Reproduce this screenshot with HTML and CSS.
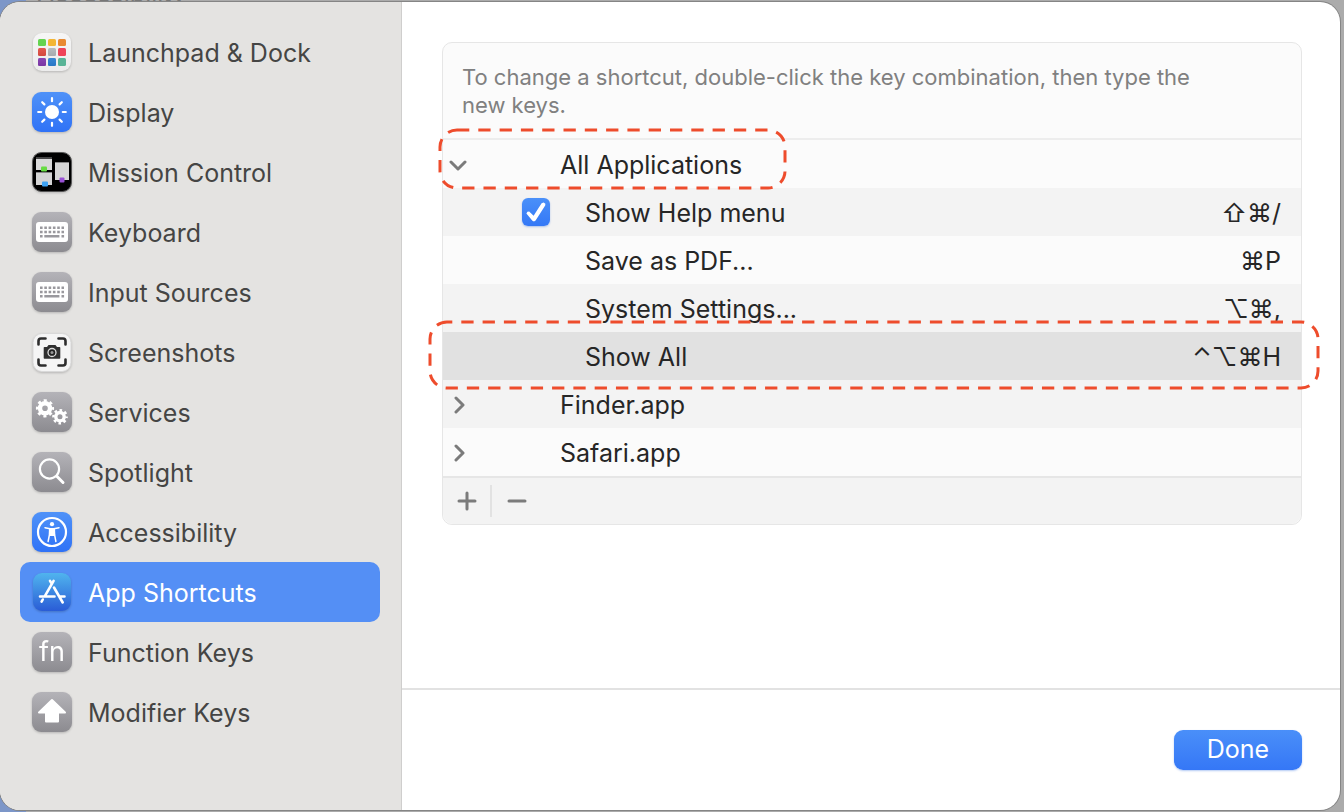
FILE: index.html
```html
<!DOCTYPE html>
<html lang="en">
<head>
    <meta charset="UTF-8">
    <meta name="viewport" content="width=device-width, initial-scale=1.0">
    <title>Keyboard Shortcuts</title>
    <link rel="stylesheet" href="styles.css">
</head>
<body>
    <!-- Shared gradients and tile shapes -->
    <svg class="defs" aria-hidden="true">
        <defs>
            <linearGradient id="gray" x1="0" y1="0" x2="0" y2="1"><stop offset="0" stop-color="#b4b3b8"/><stop offset="1" stop-color="#8c8b90"/></linearGradient>
            <linearGradient id="blue" x1="0" y1="0" x2="0" y2="1"><stop offset="0" stop-color="#4f92f8"/><stop offset="1" stop-color="#2f72f6"/></linearGradient>
            <linearGradient id="store" x1="0" y1="0" x2="0" y2="1"><stop offset="0" stop-color="#50b4ee"/><stop offset="1" stop-color="#2a5cd6"/></linearGradient>
            <linearGradient id="shade" x1="0" y1="0" x2="0" y2="1"><stop offset="0" stop-color="#fff" stop-opacity=".25"/><stop offset="1" stop-color="#000" stop-opacity=".25"/></linearGradient>
            <linearGradient id="tile" x1="0" y1="0" x2="0" y2="1"><stop offset="0" stop-color="#f6f6f6"/><stop offset="1" stop-color="#ececec"/></linearGradient>
            <symbol id="keys" viewBox="0 0 40 40">
                <rect width="40" height="40" rx="9" fill="url(#gray)"/>
                <rect x="4" y="10" width="32" height="20" rx="3" fill="#fff"/>
                <path d="M8 15.7h24M8 20h24" stroke="#99989d" stroke-width="2.5" stroke-dasharray="2.6 1.7"/>
                <path d="M8 24.3h2.6M12.3 24.3h15.1M29.5 24.3h2.6" stroke="#99989d" stroke-width="2.5"/>
            </symbol>
        </defs>
    </svg>

    <div class="backdrop" aria-hidden="true"><span>Accessibility</span></div>

    <div class="window">
        <nav class="sidebar">
            <a href="#launchpad">
                <svg class="icon" viewBox="0 0 40 40">
                    <rect x="1" y="1" width="38" height="38" rx="9" fill="url(#tile)"/>
                    <g>
                        <rect x="6" y="7" width="8" height="7" rx="1.5" fill="#65d450"/><rect x="16" y="7" width="8" height="7" rx="1.5" fill="#f3b636"/><rect x="26" y="7" width="8" height="7" rx="1.5" fill="#e88a32"/>
                        <rect x="6" y="16" width="8" height="8" rx="1.5" fill="#df3d31"/><rect x="16" y="16" width="8" height="8" rx="1.5" fill="#aab1b5"/><rect x="26" y="16" width="8" height="8" rx="1.5" fill="#ee4459"/>
                        <rect x="6" y="26" width="8" height="8" rx="1.5" fill="#8e3fc0"/><rect x="16" y="26" width="8" height="8" rx="1.5" fill="#2f8ce8"/><rect x="26" y="26" width="8" height="8" rx="1.5" fill="#59b497"/>
                    </g>
                    <path d="M6 16h8v8H6zM16 16h8v8h-8zM6 26h8v8H6zM16 26h8v8h-8z" fill="url(#shade)" opacity=".6"/>
                </svg>
                Launchpad &amp; Dock
            </a>
            <a href="#display">
                <svg class="icon" viewBox="0 0 40 40">
                    <rect width="40" height="40" rx="9" fill="url(#blue)"/>
                    <circle cx="20" cy="20" r="7" fill="#fff"/>
                    <path d="M20 6.2v3M20 30.8v3M6.2 20h3M30.8 20h3M10.2 10.2l2.2 2.2M27.6 27.6l2.2 2.2M10.2 29.8l2.2-2.2M27.6 12.4l2.2-2.2" stroke="#fff" stroke-width="2.2" stroke-linecap="round"/>
                </svg>
                Display
            </a>
            <a href="#mission-control">
                <svg class="icon" viewBox="0 0 40 40">
                    <rect x="0.5" y="0.5" width="39" height="39" rx="9" fill="#000" stroke="#555"/>
                    <rect x="4" y="7" width="16" height="11" fill="#d9d9d9"/><rect x="4" y="21" width="16" height="12" fill="#d4d4d4"/><rect x="23" y="11" width="14" height="17" fill="#d6d6d6"/>
                    <path d="M4 6h16M4 20.5h16M23 10.5h14" stroke="#888"/>
                    <rect x="9" y="14.5" width="6" height="5" rx="1" fill="#67dc43"/><rect x="10" y="29.5" width="6" height="5" rx="1" fill="#3ea2f3"/><rect x="27.5" y="25.5" width="5" height="5" rx="1" fill="#9850d4"/>
                </svg>
                Mission Control
            </a>
            <a href="#keyboard">
                <svg class="icon" viewBox="0 0 40 40"><use href="#keys"/></svg>
                Keyboard
            </a>
            <a href="#input-sources">
                <svg class="icon" viewBox="0 0 40 40"><use href="#keys"/></svg>
                Input Sources
            </a>
            <a href="#screenshots">
                <svg class="icon" viewBox="0 0 40 40">
                    <rect x="1" y="1.5" width="38" height="38" rx="9" fill="#f5f5f5" stroke="#d9d9d9"/>
                    <path d="M6.5 12.5V9q0-2.5 2.5-2.5h4.5M26.5 6.5H31q2.5 0 2.5 2.5v3.5M33.5 27.5V31q0 2.5-2.5 2.5h-4.5M13.5 33.5H9q-2.5 0-2.5-2.5v-3.5" fill="none" stroke="#2d2d2d" stroke-width="2.6" stroke-linecap="round"/>
                    <path d="M12.5 15H15l1.500-2h7l1.500 2h2.500q.8 0 .8.8V26q0 .8-.8.8h-15q-.8 0-.8-.8V15.800q0-.8.8-.8z" fill="#303030"/>
                    <circle cx="20" cy="20.5" r="4" fill="#222" stroke="#ddd" stroke-width="1.3"/><circle cx="20" cy="20.5" r="1.5" fill="#999"/>
                </svg>
                Screenshots
            </a>
            <a href="#services">
                <svg class="icon" viewBox="0 0 40 40">
                    <rect width="40" height="40" rx="9" fill="url(#gray)"/>
                    <g fill="none" stroke="#fff">
                        <circle cx="13" cy="16.3" r="5" stroke-width="4.4"/>
                        <circle cx="13" cy="16.3" r="7.7" stroke-width="2.8" stroke-dasharray="3.024" stroke-dashoffset="1.512"/>
                        <circle cx="28" cy="24.7" r="4.2" stroke-width="3.4"/>
                        <circle cx="28" cy="24.7" r="6.5" stroke-width="2.6" stroke-dasharray="2.553" stroke-dashoffset="1.276"/>
                    </g>
                </svg>
                Services
            </a>
            <a href="#spotlight">
                <svg class="icon" viewBox="0 0 40 40">
                    <rect width="40" height="40" rx="9" fill="url(#gray)"/>
                    <circle cx="17.5" cy="17" r="9.6" fill="none" stroke="#fff" stroke-width="2.2"/>
                    <path d="M24.8 24.3l6.2 6.2" stroke="#fff" stroke-width="3" stroke-linecap="round"/>
                </svg>
                Spotlight
            </a>
            <a href="#accessibility">
                <svg class="icon" viewBox="0 0 40 40">
                    <rect width="40" height="40" rx="9" fill="url(#blue)"/>
                    <circle cx="20" cy="20" r="14" fill="none" stroke="#fff" stroke-width="2.2"/>
                    <circle cx="20" cy="12.2" r="2.1" fill="#fff"/>
                    <path d="M13 15.7l5 1.1h4l5-1.1" fill="none" stroke="#fff" stroke-width="1.5" stroke-linecap="round" stroke-linejoin="round"/>
                    <path d="M22.3 17l.3 6 1.3 6.5M17.7 17l-.3 6-1.3 6.5" fill="none" stroke="#fff" stroke-width="1.5" stroke-linecap="round"/>
                    <path d="M17.5 16.5h5l.3 7.5h-5.6z" fill="#fff"/>
                </svg>
                Accessibility
            </a>
            <a href="#app-shortcuts" class="selected" aria-current="page">
                <svg class="icon" viewBox="0 0 40 40">
                    <rect x="1" y="1" width="38" height="38" rx="9" fill="url(#store)"/>
                    <path d="M21.6 8.8L13 23.8M10.8 27.5l-1.2 2.2M18 8.8l1.4 2.4M22 15.5l8.7 15M8 24.5h14.5M28.3 24.5h4.2" stroke="#fff" stroke-width="2.6" stroke-linecap="round"/>
                </svg>
                App Shortcuts
            </a>
            <a href="#function-keys">
                <span class="icon fn" aria-hidden="true">fn</span>
                Function Keys
            </a>
            <a href="#modifier-keys">
                <svg class="icon" viewBox="0 0 40 40">
                    <rect width="40" height="40" rx="9" fill="url(#gray)"/>
                    <path d="M20 8L33 20.5H26v9H14v-9H7z" fill="#fff" stroke="#fff" stroke-width="2" stroke-linejoin="round"/>
                </svg>
                Modifier Keys
            </a>
        </nav>

        <main class="pane">
            <section class="content">
                <div class="card">
                    <p class="hint">To change a shortcut, double-click the key combination, then type the new keys.</p>
                    <table class="shortcuts">
                        <tbody>
                            <tr>
                                <td class="toggle">
                                    <button type="button" aria-label="Collapse All Applications" aria-expanded="true"><svg width="18" height="18" viewBox="0 0 18 18"><path d="M2 6l7 7 7-7"/></svg></button>
                                    <svg class="mark mark-group" aria-hidden="true"><rect x="2" y="2" rx="17"/></svg>
                                </td>
                                <td class="check"></td>
                                <td>All Applications</td>
                                <td class="combo"></td>
                            </tr>
                            <tr>
                                <td class="toggle"></td>
                                <td class="check"><input type="checkbox" id="helpMenu" checked></td>
                                <td class="child"><label for="helpMenu">Show Help menu</label></td>
                                <td class="combo">⇧⌘/</td>
                            </tr>
                            <tr>
                                <td class="toggle"></td>
                                <td class="check"></td>
                                <td class="child">Save as PDF...</td>
                                <td class="combo">⌘P</td>
                            </tr>
                            <tr>
                                <td class="toggle"></td>
                                <td class="check"></td>
                                <td class="child">System Settings...</td>
                                <td class="combo">⌥⌘,</td>
                            </tr>
                            <tr class="current">
                                <td class="toggle"><svg class="mark mark-row" aria-hidden="true"><rect x="2" y="2" rx="17"/></svg></td>
                                <td class="check"></td>
                                <td class="child">Show All</td>
                                <td class="combo">⌃⌥⌘H</td>
                            </tr>
                            <tr>
                                <td class="toggle"><button type="button" aria-label="Expand Finder.app" aria-expanded="false"><svg width="18" height="18" viewBox="0 0 18 18"><path d="M7 2l7 7-7 7"/></svg></button></td>
                                <td class="check"></td>
                                <td>Finder.app</td>
                                <td class="combo"></td>
                            </tr>
                            <tr>
                                <td class="toggle"><button type="button" aria-label="Expand Safari.app" aria-expanded="false"><svg width="18" height="18" viewBox="0 0 18 18"><path d="M7 2l7 7-7 7"/></svg></button></td>
                                <td class="check"></td>
                                <td>Safari.app</td>
                                <td class="combo"></td>
                            </tr>
                        </tbody>
                    </table>
                    <div class="tools">
                        <button type="button" aria-label="Add shortcut"><svg width="20" height="20" viewBox="0 0 20 20"><path d="M10 2v16M2 10h16"/></svg></button>
                        <button type="button" aria-label="Remove shortcut"><svg width="20" height="20" viewBox="0 0 20 20"><path d="M2 10h16"/></svg></button>
                    </div>
                </div>
            </section>
            <footer class="actions">
                <button type="button" class="done">Done</button>
            </footer>
        </main>
    </div>
</body>
</html>
```

FILE: styles.css
```css
* {
    box-sizing: border-box;
}
body {
    margin: 0;
    padding: 2px 4px 2px 0;
    min-height: 100vh;
    display: flex;
    position: relative;
    background: #ababab;
    font-family: Inter, "Liberation Sans", sans-serif;
    font-size: 25px;
    color: #262626;
}
button {
    padding: 0;
    border: 0;
    background: none;
    font: inherit;
}
.defs {
    position: absolute;
    width: 0;
    height: 0;
}

/* Window behind the dialog */
.backdrop {
    position: absolute;
    inset: 0;
    overflow: hidden;
    background: linear-gradient(90deg, #7c96c8 26px, transparent 26px);
}
.backdrop span {
    position: absolute;
    left: 37px;
    top: -22px;
    line-height: 30px;
    color: #777;
}

.window {
    flex: 1;
    display: flex;
    position: relative;
    border-radius: 20px;
    background: #fff;
    box-shadow: 0 0 0 1px #858585;
}

/* Sidebar */
.sidebar {
    width: 402px;
    flex: none;
    padding: 20px 21px 20px 20px;
    border-right: 1px solid #cfcecd;
    border-radius: 20px 0 0 20px;
    background: #e4e3e1;
}
.sidebar a {
    display: flex;
    align-items: center;
    gap: 16px;
    height: 60px;
    padding: 2px 12px 0;
    border-radius: 10px;
    color: #454544;
    text-decoration: none;
}
.sidebar a.selected {
    background: #548ff5;
    color: #fff;
}
.icon {
    width: 40px;
    height: 40px;
    flex: none;
    margin-bottom: 2px;
    filter: drop-shadow(0 1px 1px rgba(0, 0, 0, 0.2));
}
.fn {
    border-radius: 9px;
    background: linear-gradient(#b4b3b8, #8c8b90);
    color: #fff;
    font-size: 27px;
    line-height: 40px;
    text-align: center;
}

/* Right pane */
.pane {
    flex: 1;
    display: flex;
    flex-direction: column;
}
.content {
    flex: 1;
    padding: 40px 38px 40px 40px;
}
.card {
    border: 1px solid #e6e6e6;
    border-radius: 10px;
    background: #fbfbfb;
}
.hint {
    margin: 0;
    padding: 20px 80px 19px 19px;
    border-bottom: 2px solid #ededed;
    color: #808080;
    font-size: 22px;
    line-height: 28px;
}
.shortcuts {
    width: 100%;
    border-collapse: collapse;
    table-layout: fixed;
}
.shortcuts td {
    height: 48px;
    padding: 2px 0 0;
}
.shortcuts tr:nth-child(even) {
    background: #f3f3f3;
}
.shortcuts tr.current {
    background: #e1e1e1;
}
.shortcuts .toggle {
    position: relative;
    width: 79px;
    padding-left: 6px;
}
.toggle button {
    display: block;
    width: 18px;
    height: 18px;
}
.toggle svg,
.tools svg {
    display: block;
    fill: none;
    stroke: #7b7b7b;
    stroke-width: 3;
    stroke-linecap: round;
    stroke-linejoin: round;
}
.shortcuts .check {
    width: 38px;
    padding: 0;
}
.shortcuts .child {
    padding-left: 25px;
}
.shortcuts .combo {
    width: 240px;
    padding-right: 20px;
    text-align: right;
}
.check input {
    appearance: none;
    display: grid;
    place-items: center;
    width: 28px;
    height: 28px;
    margin: 0;
    border-radius: 6px;
    background: linear-gradient(#4a90f9, #3478f6);
    box-shadow: 0 1px 2px rgba(0, 80, 220, 0.3);
}
.check input:checked::after {
    content: "";
    width: 20px;
    height: 20px;
    background: #fff;
    clip-path: polygon(2% 58%, 7% 49%, 16% 48%, 38% 69%, 78% 6%, 88% 2%, 97% 9%, 96% 18%, 48% 93%, 40% 97%, 32% 94%);
}

/* Dashed callouts drawn over the table */
.toggle .mark {
    position: absolute;
    z-index: 1;
    pointer-events: none;
    stroke: #ee4c2c;
    stroke-linecap: butt;
    stroke-dasharray: 12.3 9;
}
.mark rect {
    width: calc(100% - 4px);
    height: calc(100% - 4px);
}
.mark-group {
    left: -5px;
    top: -12px;
    width: 349px;
    height: 62px;
}
.mark-row {
    left: -15px;
    top: -12px;
    width: 892px;
    height: 70px;
    stroke-dashoffset: 7px;
}

.tools {
    display: flex;
    align-items: center;
    height: 48px;
    border-top: 2px solid #e6e6e6;
    border-radius: 0 0 10px 10px;
    background: #f3f3f3;
}
.tools button {
    display: grid;
    place-items: center;
    width: 49px;
    height: 32px;
}
.tools button:first-child {
    border-right: 2px solid #e2e2e2;
}

.actions {
    padding: 40px 38px;
    border-top: 2px solid #e2e2e2;
}
.done {
    display: block;
    width: 128px;
    height: 40px;
    margin-left: auto;
    padding-bottom: 2px;
    border-radius: 9px;
    background: linear-gradient(#4a8ff9, #3577f6);
    box-shadow: 0 1px 2px rgba(0, 80, 220, 0.3);
    color: #fff;
}
```
